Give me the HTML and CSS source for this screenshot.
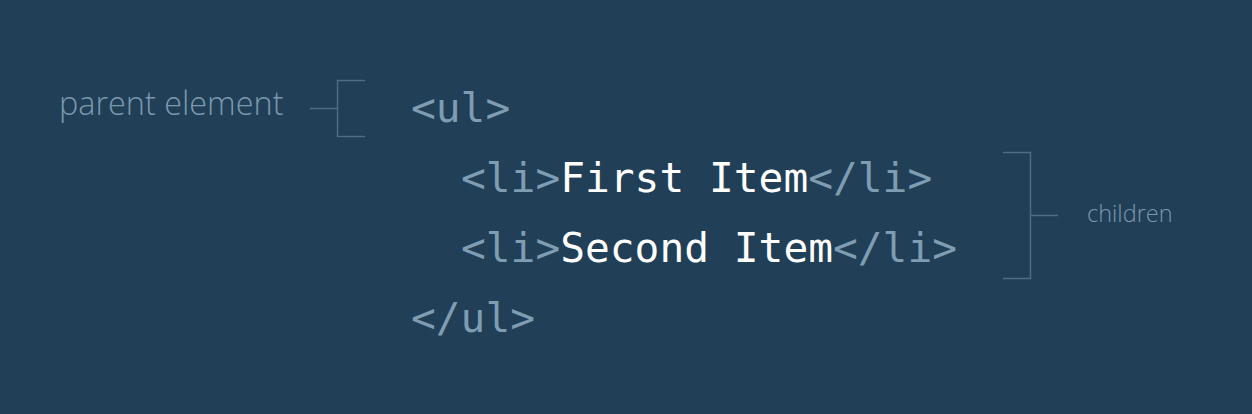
FILE: index.html
```html
<!DOCTYPE html>
<html>
<head>
<meta charset="utf-8">
<link rel="stylesheet" href="styles.css">
</head>
<body>
<div class="stage">
  <div class="note note-parent">parent element</div>
  <svg class="bracket bracket-left" width="60" height="70" viewBox="0 0 60 70">
    <path d="M5 35.5 H32.5 M60 7.5 H32.5 V63.5 H60" fill="none" stroke="#4d6e87" stroke-width="1.5"/>
  </svg>
  <div class="line line-1"><span class="tag">&lt;ul&gt;</span></div>
  <div class="line line-2 indent"><span class="tag">&lt;li&gt;</span><span class="txt">First Item</span><span class="tag">&lt;/li&gt;</span></div>
  <div class="line line-3 indent"><span class="tag">&lt;li&gt;</span><span class="txt">Second Item</span><span class="tag">&lt;/li&gt;</span></div>
  <div class="line line-4"><span class="tag">&lt;/ul&gt;</span></div>
  <svg class="bracket bracket-right" width="55" height="140" viewBox="0 0 55 140">
    <path d="M0 9.5 H27.5 V135.5 H0 M27.5 72.5 H55" fill="none" stroke="#4d6e87" stroke-width="1.5"/>
  </svg>
  <div class="note note-children">children</div>
</div>
</body>
</html>
```
FILE: styles.css
```css
html, body {
  margin: 0;
  padding: 0;
}
body {
  background: #213f56;
  width: 1252px;
  height: 414px;
  overflow: hidden;
}
.stage {
  display: grid;
  grid-template-columns: 305px 60px 638px 55px auto;
  grid-template-rows: repeat(4, 70px);
  padding-top: 73px;
}
.note {
  font-family: "Open Sans", "Liberation Sans", sans-serif;
  font-weight: 300;
  color: #7b99ae;
  display: flex;
  align-items: center;
  white-space: nowrap;
}
.note-parent {
  grid-column: 1;
  grid-row: 1;
  padding-left: 59px;
  font-size: 32.4px;
  padding-bottom: 13px;
}
.bracket-left {
  grid-column: 2;
  grid-row: 1;
  display: block;
}
.line {
  grid-column: 3;
  font-family: "DejaVu Sans Mono", "Liberation Mono", monospace;
  font-size: 41.2px;
  line-height: 70px;
  padding-left: 46px;
  white-space: pre;
}
.line.indent {
  padding-left: 96px;
}
.line-1 { grid-row: 1; }
.line-2 { grid-row: 2; }
.line-3 { grid-row: 3; }
.line-4 { grid-row: 4; }
.tag {
  color: #7e9cb2;
}
.txt {
  color: #ffffff;
}
.bracket-right {
  grid-column: 4;
  grid-row: 2 / span 2;
  display: block;
}
.note-children {
  grid-column: 5;
  grid-row: 2 / span 2;
  padding-left: 29px;
  font-size: 23.5px;
}
```
